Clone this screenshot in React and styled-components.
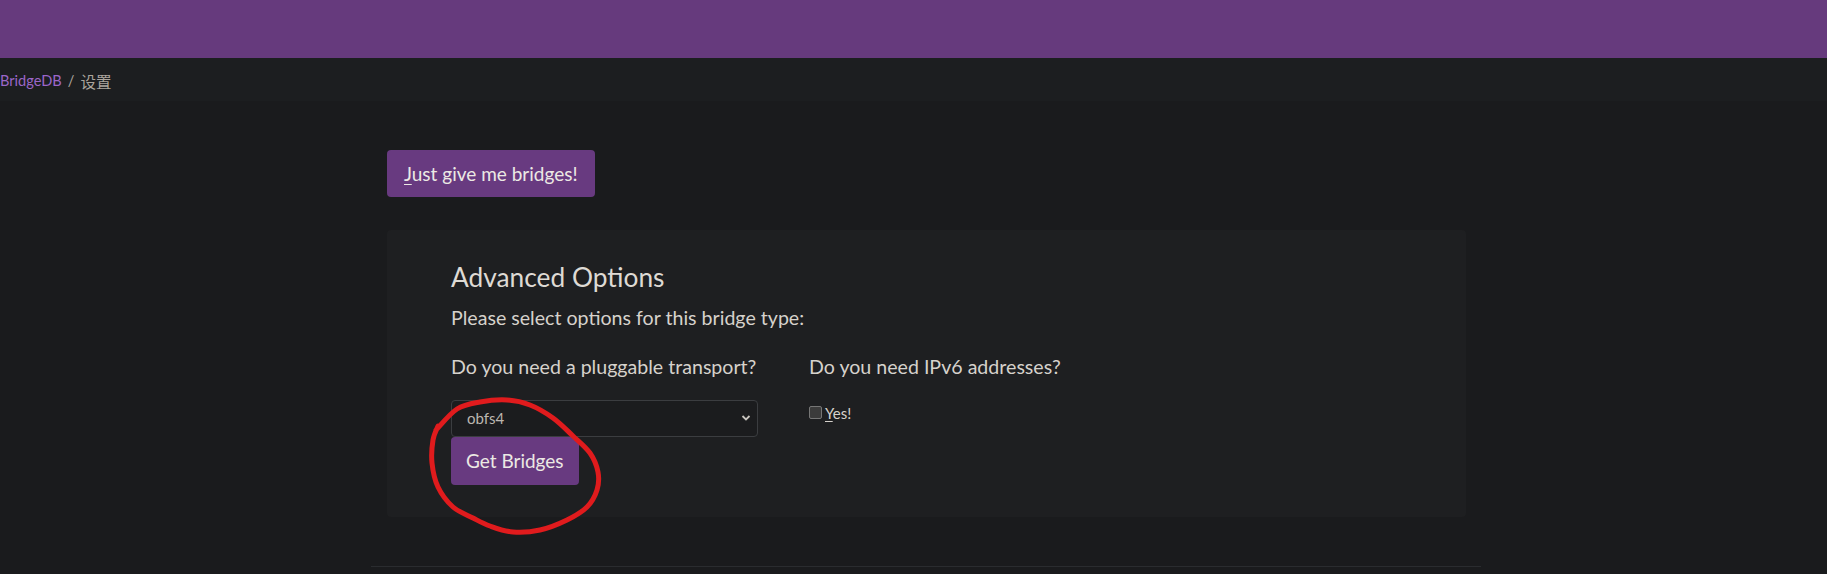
import React from "react";
import styled, { createGlobalStyle } from "styled-components";

const GlobalStyle = createGlobalStyle`
  html, body {
    margin: 0;
    padding: 0;
    background: #1a1b1d;
    color: #d6d2cc;
    font-family: Lato, "Noto Sans CJK SC", sans-serif;
  }
  * { box-sizing: border-box; }
`;

const Page = styled.div`
  position: relative;
  width: 1827px;
  min-height: 574px;
  overflow: hidden;
`;

const TopBar = styled.header`
  height: 58px;
  background: #663a7d;
`;

const Breadcrumb = styled.nav`
  height: 43px;
  background: #1c1e20;
  display: flex;
  align-items: center;
  gap: 6px;
  padding-top: 2px;
  font-size: 14.6px;
  color: #aba59d;
`;

const CrumbLink = styled.a`
  color: #9b66c8;
  text-decoration: none;
`;

const CrumbCurrent = styled.span`
  font-size: 15.5px;
`;

const Main = styled.main`
  width: 1110px;
  margin-left: 371px;
`;

const Content = styled.div`
  padding: 49px 15px 0 16px;
`;

const PurpleButton = styled.button`
  display: inline-flex;
  align-items: center;
  justify-content: center;
  height: ${(p) => p.$h}px;
  padding: 0 ${(p) => p.$px}px;
  background: #683a80;
  color: #ece9e4;
  border: none;
  border-radius: 4px;
  font-family: Lato, sans-serif;
  font-size: 19px;
  cursor: pointer;
  u { text-decoration-thickness: 1px; text-underline-offset: 3px; }
`;

const Panel = styled.section`
  margin-top: 33px;
  height: 287px;
  padding: 32px 64px 32px 64px;
  background: #1e1f21;
  border-radius: 4px;
`;

const Heading = styled.h3`
  margin: 0;
  font-size: 26.3px;
  line-height: 1.2;
  font-weight: 400;
  color: #dedad4;
`;

const Lead = styled.p`
  margin: 10.5px 0 0;
  font-size: 19.6px;
  line-height: 28.5px;
  color: #d6d2cc;
`;

const Columns = styled.div`
  display: grid;
  grid-template-columns: 358px 1fr;
  margin-top: 20.5px;
`;

const Column = styled.div`
  display: flex;
  flex-direction: column;
  align-items: flex-start;
`;

const Question = styled.label`
  font-size: 19.6px;
  line-height: 28.5px;
  color: #d6d2cc;
`;

const SelectWrap = styled.div`
  position: relative;
  margin-top: 18px;
  width: 307px;
  height: 37px;
`;

const Select = styled.select`
  appearance: none;
  width: 100%;
  height: 100%;
  padding: 0 30px 0 15px;
  background: #1b1c1e;
  color: #bcb7b0;
  border: 1px solid #3b3d40;
  border-radius: 4px;
  font-family: Lato, sans-serif;
  font-size: 15px;
`;

const Chevron = styled.svg`
  position: absolute;
  right: 7px;
  top: 14px;
  pointer-events: none;
`;

const CheckRow = styled.label`
  display: flex;
  align-items: center;
  gap: 3px;
  margin-top: 22px;
  font-size: 15px;
  color: #d6d2cc;
  u { text-underline-offset: 2px; }
`;

const Box = styled.span`
  display: inline-block;
  width: 13px;
  height: 13px;
  background: #3b3b3b;
  border: 1px solid #767676;
  border-radius: 2px;
`;

const Footer = styled.footer`
  margin-top: 49px;
  border-top: 1px solid #2a2c2f;
`;

const Annotation = styled.svg`
  position: absolute;
  left: 0;
  top: 0;
  pointer-events: none;
`;

const pts = [
  [436, 430], [457, 409], [480, 402], [507, 400], [530, 405], [553, 418],
  [573, 436], [590, 453], [598, 472], [597, 490], [587, 507], [567, 520],
  [540, 530], [513, 532], [490, 526], [473, 518], [453, 507], [438, 487],
  [432, 463], [433, 440], [438, 426],
];

function smoothPath(p) {
  let d = `M${p[0][0]},${p[0][1]}`;
  for (let i = 0; i < p.length - 1; i++) {
    const p0 = p[i - 1] || p[i];
    const p1 = p[i];
    const p2 = p[i + 1];
    const p3 = p[i + 2] || p2;
    const c1 = [p1[0] + (p2[0] - p0[0]) / 6, p1[1] + (p2[1] - p0[1]) / 6];
    const c2 = [p2[0] - (p3[0] - p1[0]) / 6, p2[1] - (p3[1] - p1[1]) / 6];
    d += ` C${c1[0]},${c1[1]} ${c2[0]},${c2[1]} ${p2[0]},${p2[1]}`;
  }
  return d;
}

export default function App() {
  return (
    <Page>
      <GlobalStyle />
      <TopBar />
      <Breadcrumb>
        <CrumbLink href="#">BridgeDB</CrumbLink>
        <span>/</span>
        <CrumbCurrent>设置</CrumbCurrent>
      </Breadcrumb>
      <Main>
        <Content>
          <PurpleButton $h={47} $px={17}>
            <span><u>J</u>ust give me bridges!</span>
          </PurpleButton>
          <Panel>
            <Heading>Advanced Options</Heading>
            <Lead>Please select options for this bridge type:</Lead>
            <Columns>
              <Column>
                <Question>Do you need a pluggable transport?</Question>
                <SelectWrap>
                  <Select defaultValue="obfs4">
                    <option value="obfs4">obfs4</option>
                    <option value="none">none</option>
                  </Select>
                  <Chevron width="10" height="8" viewBox="0 0 10 8">
                    <path d="M1.5 2 L5 5.5 L8.5 2" fill="none" stroke="#c9c5bf" strokeWidth="1.8" />
                  </Chevron>
                </SelectWrap>
                <PurpleButton $h={48} $px={15}>Get Bridges</PurpleButton>
              </Column>
              <Column>
                <Question>Do you need IPv6 addresses?</Question>
                <CheckRow>
                  <Box />
                  <span><u>Y</u>es!</span>
                </CheckRow>
              </Column>
            </Columns>
          </Panel>
        </Content>
        <Footer />
      </Main>
      <Annotation width="1827" height="574" viewBox="0 0 1827 574">
        <path d={smoothPath(pts)} fill="none" stroke="#e01b1d" strokeWidth="5" strokeLinecap="round" strokeLinejoin="round" />
      </Annotation>
    </Page>
  );
}
